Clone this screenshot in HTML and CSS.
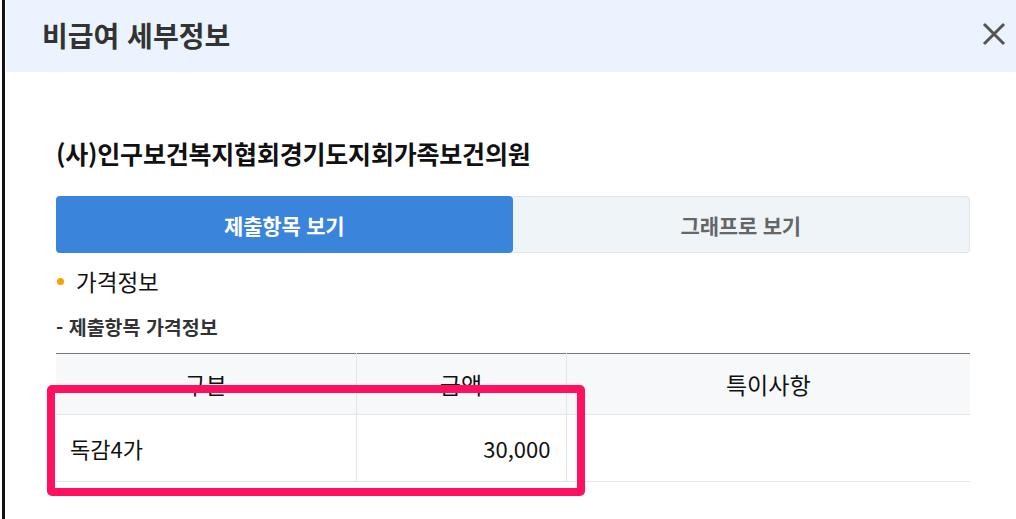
FILE: index.html
```html
<!DOCTYPE html>
<html lang="ko">
<head>
<meta charset="utf-8">
<link rel="stylesheet" href="styles.css">
</head>
<body>
<div class="frame">
  <div class="modal">
    <div class="modal-header">
      <h1 class="modal-title">비급여 세부정보</h1>
      <button class="close-btn" aria-label="닫기">
        <svg width="24" height="24" viewBox="0 0 24 24"><path d="M2 2 L22 22 M22 2 L2 22" stroke="#555" stroke-width="3" fill="none"/></svg>
      </button>
    </div>
    <div class="modal-body">
      <h2 class="org-name">(사)인구보건복지협회경기도지회가족보건의원</h2>
      <div class="tabs">
        <div class="tab active">제출항목 보기</div>
        <div class="tab">그래프로 보기</div>
      </div>
      <h3 class="section-title"><span class="dot"></span>가격정보</h3>
      <h4 class="sub-title">- 제출항목 가격정보</h4>
      <div class="table-wrap">
        <table class="price-table">
          <colgroup>
            <col class="c1"><col class="c2"><col class="c3">
          </colgroup>
          <thead>
            <tr><th>구분</th><th>금액</th><th>특이사항</th></tr>
          </thead>
          <tbody>
            <tr><td class="name">독감4가</td><td class="amount">30,000</td><td></td></tr>
          </tbody>
        </table>
        <div class="highlight"></div>
      </div>
    </div>
  </div>
</div>
</body>
</html>
```
FILE: styles.css
```css
* { box-sizing: border-box; }
html, body { margin: 0; padding: 0; background: #fff; }
body {
  font-family: "Noto Sans CJK KR", "Noto Sans", sans-serif;
  color: #111;
  width: 1016px;
  height: 519px;
  overflow: hidden;
}
.frame {
  margin-left: 2px;
  border-left: 3px solid #111;
  padding-left: 1px;
  height: 519px;
}
.modal {
  width: 1010px;
  background: #fff;
}
.modal-header {
  height: 72px;
  background: #ebf3fe;
  display: flex;
  align-items: center;
  justify-content: space-between;
  padding: 0 10px 0 36px;
}
.modal-title {
  margin: 0;
  font-size: 28px;
  font-weight: 700;
  color: #333;
  line-height: 36px;
  margin-top: -2px;
}
.close-btn {
  border: 0;
  background: none;
  padding: 0;
  width: 24px;
  height: 24px;
  display: flex;
  margin-top: -4px;
}
.modal-body {
  padding: 0 46px 0 50px;
}
.org-name {
  margin: 65px 0 0;
  font-size: 25px;
  font-weight: 700;
  line-height: 32px;
  color: #111;
  letter-spacing: -0.2px;
}
.tabs {
  margin-top: 27px;
  display: flex;
  height: 57px;
}
.tab {
  flex: 1;
  display: flex;
  align-items: center;
  justify-content: center;
  font-size: 21px;
  font-weight: 700;
  color: #666;
  background: #eff4f9;
  border: 1px solid #e1e6eb;
  border-left: 0;
  border-radius: 0 4px 4px 0;
  letter-spacing: -0.2px;
}
.tab.active {
  background: #3a84dc;
  color: #fff;
  border: 0;
  border-radius: 4px;
}
.section-title {
  margin: 14px 0 0;
  font-size: 22.5px;
  font-weight: 400;
  line-height: 28px;
  display: flex;
  align-items: center;
  color: #111;
}
.dot {
  width: 7px;
  height: 7px;
  border-radius: 50%;
  background: #f5a200;
  margin: 0 12px 0 1px;
}
.sub-title {
  margin: 20px 0 0;
  font-size: 19.5px;
  font-weight: 700;
  line-height: 24px;
  color: #333;
}
.table-wrap {
  position: relative;
  margin-top: 14px;
}
.price-table {
  width: 914px;
  border-collapse: collapse;
  table-layout: fixed;
  border-top: 1px solid #777;
}
.c1 { width: 300px; }
.c2 { width: 210px; }
.c3 { width: 404px; }
.price-table th {
  height: 61px;
  background: #f6f8fa;
  font-size: 23px;
  font-weight: 400;
  color: #111;
  border-bottom: 1px solid #e5e5e5;
  border-left: 1px solid #e5e5e5;
  padding: 0;
}
.price-table td {
  height: 67px;
  font-size: 22px;
  color: #111;
  border-bottom: 1px solid #e5e5e5;
  border-left: 1px solid #e5e5e5;
  padding: 0 15px;
}
.price-table th:first-child, .price-table td:first-child { border-left: 0; }
.price-table td.name { text-align: left; padding-left: 14px; }
.price-table td.amount { text-align: right; }
.highlight {
  position: absolute;
  left: -9px;
  top: 32px;
  width: 538px;
  height: 111px;
  border: 8px solid #ff1060;
  border-radius: 5px;
}
```
